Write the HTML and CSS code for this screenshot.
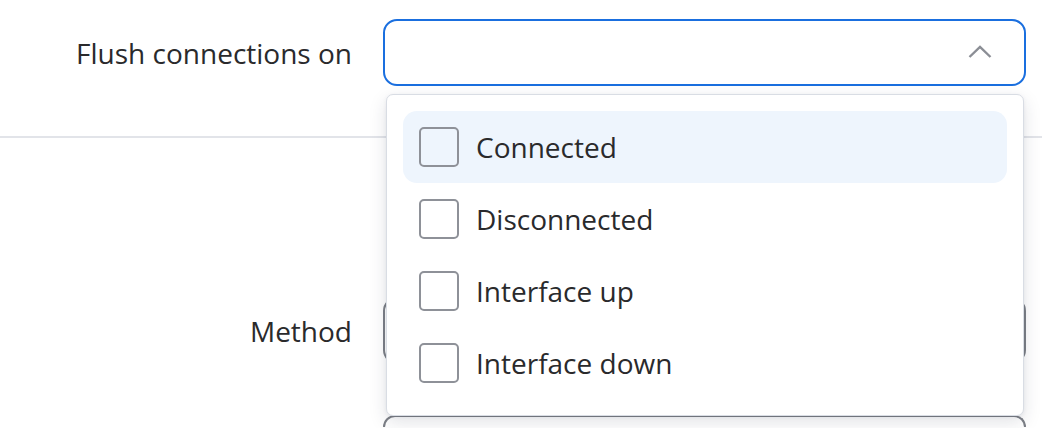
FILE: index.html
```html
<!DOCTYPE html>
<html lang="en">
<head>
<meta charset="utf-8">
<title>Flush connections</title>
<link rel="stylesheet" href="styles.css">
</head>
<body>
<div class="form">
  <div class="row row-first">
    <div class="label">Flush connections on</div>
    <div class="select select-open">
      <span class="chevron">
        <svg width="24" height="13" viewBox="0 0 24 13"><polyline points="1.5,12 12,2 22.5,12" fill="none" stroke="#8b8e95" stroke-width="2.4"/></svg>
      </span>
      <div class="menu">
        <div class="option option-active"><span class="checkbox"></span><span class="option-text">Connected</span></div>
        <div class="option"><span class="checkbox"></span><span class="option-text">Disconnected</span></div>
        <div class="option"><span class="checkbox"></span><span class="option-text">Interface up</span></div>
        <div class="option"><span class="checkbox"></span><span class="option-text">Interface down</span></div>
      </div>
    </div>
  </div>
  <div class="divider"></div>
  <div class="row row-method">
    <div class="label">Method</div>
    <div class="select select-closed"></div>
  </div>
  <div class="row row-next">
    <div class="label"></div>
    <div class="select select-closed"></div>
  </div>
</div>
</body>
</html>
```

FILE: styles.css
```css
html, body {
  margin: 0;
  padding: 0;
  background: #ffffff;
}
body {
  font-family: "Open Sans", "Noto Sans", sans-serif;
  color: #2a2a2c;
  overflow: hidden;
  height: 428px;
}
.form {
  padding-top: 19px;
}
.row {
  display: flex;
  align-items: center;
  padding-right: 16px;
}
.label {
  width: 352px;
  flex: none;
  text-align: right;
  font-size: 28px;
  line-height: 38px;
  padding-right: 31px;
  box-sizing: content-box;
}
.select {
  position: relative;
  flex: 1;
  height: 67px;
  box-sizing: border-box;
  border-radius: 14px;
  background: #fff;
}
.select-open {
  border: 2px solid #1a6fdf;
}
.select-closed {
  border: 2px solid #7d8087;
}
.row-next .select {
  height: 12px;
  border-bottom: 0;
  border-radius: 14px 14px 0 0;
}
.chevron {
  position: absolute;
  right: 32px;
  top: 24px;
  display: block;
  line-height: 0;
}
.divider {
  height: 2px;
  background: #e2e4e9;
  margin-top: 50px;
}
.row-method {
  margin-top: 159px;
}
.row-next {
  margin-top: 51px;
}
.menu {
  position: absolute;
  z-index: 5;
  top: 73px;
  left: 1px;
  right: 0;
  box-sizing: border-box;
  background: #fff;
  border: 1px solid #d9dde4;
  border-radius: 7px;
  padding: 16px;
  box-shadow: 0 6px 18px rgba(30, 40, 60, 0.13), 0 1px 4px rgba(30, 40, 60, 0.06);
}
.option {
  display: flex;
  align-items: center;
  height: 72px;
  padding-left: 16px;
  border-radius: 14px;
}
.option-active {
  background: #eef5fd;
}
.checkbox {
  width: 40px;
  height: 40px;
  box-sizing: border-box;
  border: 2px solid #8e9198;
  border-radius: 5px;
  background: #fff;
  flex: none;
}
.option-active .checkbox {
  background: transparent;
}
.option-text {
  margin-left: 17px;
  font-size: 28px;
  line-height: 38px;
  color: #2a2a2c;
}
```
